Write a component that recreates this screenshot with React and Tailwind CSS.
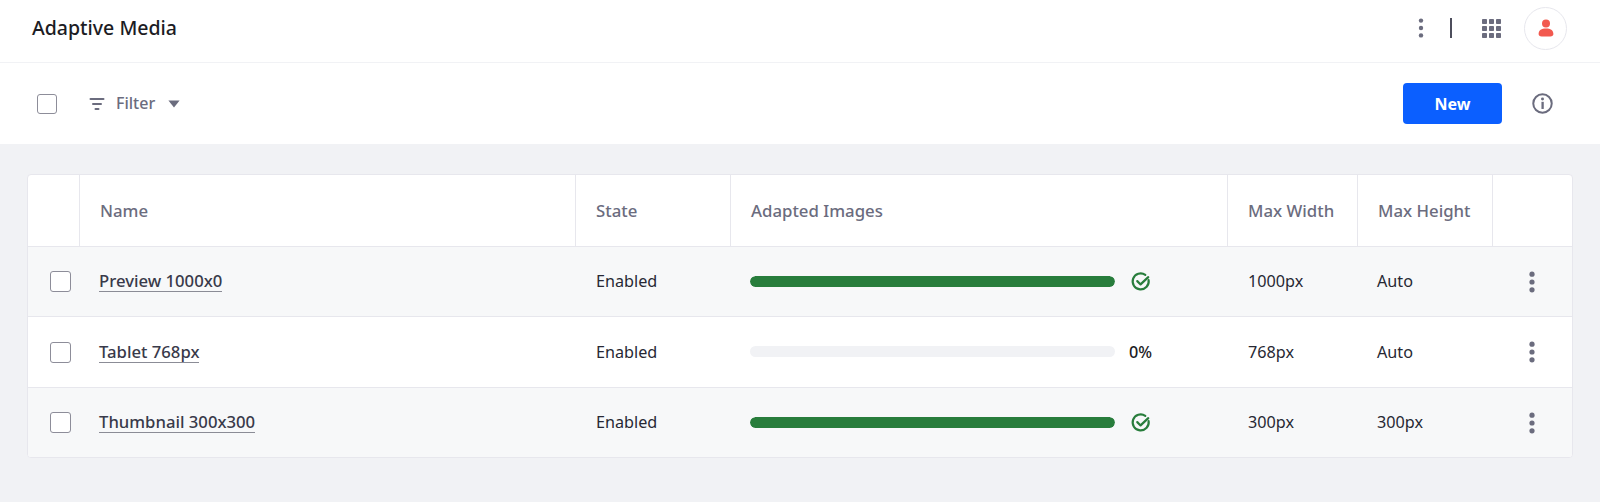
const cols = "grid-cols-[52px_496px_155px_497px_130px_135px_1fr]";

function Check({ className = "w-5 h-5" }) {
  return <div className={"bg-white border border-[#8d8d99] rounded-[3px] " + className} />;
}

function Kebab({ color = "#6b6c7e", r = 2.6, gap = 7.8 }) {
  return (
    <svg width="8" height="24" viewBox="0 0 8 24" fill={color}>
      <circle cx="4" cy={12 - gap} r={r} />
      <circle cx="4" cy="12" r={r} />
      <circle cx="4" cy={12 + gap} r={r} />
    </svg>
  );
}

function Head({ children, last }) {
  return (
    <div className={"flex items-center pl-[20px] h-full text-[16.8px] font-medium text-[#6b6c7e] " + (last ? "" : "border-r border-[#e7e7ed]")}>
      {children}
    </div>
  );
}

function Done() {
  return (
    <svg width="22" height="22" viewBox="0 0 20 20" fill="none" stroke="#287d3c" strokeWidth="2" strokeLinecap="round" strokeLinejoin="round">
      <path d="M16.9 8.2a7.3 7.3 0 1 1-3-4.7" />
      <path d="M6.6 9.2l3 3 7-6.6" />
    </svg>
  );
}

function Row({ name, pct, w, h, shaded, last, height }) {
  return (
    <div className={`grid ${cols} items-center ${height} text-[16.2px] text-[#272833] ${shaded ? "bg-[#f7f8f9]" : "bg-white"} ${last ? "" : "border-b border-[#e7e7ed]"}`}>
      <div className="flex justify-end pr-[9px]"><Check className="w-[21px] h-[21px]" /></div>
      <div className="pl-[19px]">
        <span className="text-[16.7px] font-medium text-[#393a4a] border-b border-[#8b8c96] leading-[20px] inline-block">{name}</span>
      </div>
      <div className="pl-[20px]">Enabled</div>
      <div className="pl-[19px] flex items-center">
        <div className="w-[365px] h-[11px] rounded-full bg-[#f1f2f5] overflow-hidden">
          {pct ? <div className="h-full w-full bg-[#287d3c] rounded-full" /> : null}
        </div>
        {pct ? (
          <span className="ml-[15px] flex"><Done /></span>
        ) : (
          <span className="ml-[14px] font-medium text-[#1c1c24]">0%</span>
        )}
      </div>
      <div className="pl-[20px]">{w}</div>
      <div className="pl-[19px]">{h}</div>
      <div className="flex justify-start pl-[35px]"><Kebab /></div>
    </div>
  );
}

export default function App() {
  return (
    <div className="min-h-[502px] bg-[#f1f2f5] font-['Noto_Sans','Open_Sans',sans-serif]">
      <header className="h-[63px] bg-white border-b border-[#f1f2f5] flex items-center pb-[6px] pl-[32px] pr-[33px]">
        <h1 className="text-[19.5px] font-medium text-[#1c1c24]">Adaptive Media</h1>
        <div className="ml-auto flex items-center">
          <Kebab r={2.2} gap={7.4} />
          <div className="w-[2px] h-[20px] bg-[#4d4e5c] ml-[25px]" />
          <svg className="ml-[30px]" width="19" height="19" viewBox="0 0 19 19" fill="#6b6c7e">
            {[0, 7, 14].flatMap((y) => [0, 7, 14].map((x) => <rect key={x + "-" + y} x={x} y={y} width="5" height="5" rx="0.8" />))}
          </svg>
          <div className="ml-[23px] w-[43px] h-[43px] rounded-full bg-white border border-[#e7e7ed] flex items-center justify-center">
            <svg width="16" height="18" viewBox="0 0 16 18" fill="#f2594f">
              <circle cx="8" cy="4.4" r="4" />
              <path d="M0.6 15c0-4 3-5.6 7.4-5.6s7.4 1.6 7.4 5.6c0 1.6-1.2 2.4-3 2.4H3.6c-1.8 0-3-.8-3-2.4z" />
            </svg>
          </div>
        </div>
      </header>

      <div className="h-[81px] bg-white flex items-center pl-[37px] pr-[47px]">
        <Check />
        <svg className="ml-[32px]" width="16" height="14" viewBox="0 0 16 14" fill="#6b6c7e">
          <rect x="0.5" y="1" width="15" height="2" rx="1" />
          <rect x="3" y="6" width="10" height="2" rx="1" />
          <rect x="5.5" y="11" width="5" height="2" rx="1" />
        </svg>
        <span className="ml-[11px] mb-[2px] text-[16px] font-medium text-[#6b6c7e]">Filter</span>
        <svg className="ml-[13px]" width="12" height="8" viewBox="0 0 12 8" fill="#6b6c7e">
          <path d="M0.4 0.6h11.2L6 7.4z" />
        </svg>
        <button className="ml-auto w-[99px] h-[41px] rounded-[4px] bg-[#0b5fff] text-white text-[16px] font-bold">New</button>
        <svg className="ml-[30px]" width="21" height="21" viewBox="0 0 20 20" fill="none">
          <circle cx="10" cy="10" r="8.8" stroke="#6b6c7e" strokeWidth="1.9" />
          <circle cx="10" cy="5.8" r="1.4" fill="#6b6c7e" />
          <rect x="9" y="8.4" width="2.2" height="6.8" fill="#6b6c7e" />
        </svg>
      </div>

      <main className="pt-[30px] px-[27px]">
        <div className="bg-white border border-[#e7e7ed] rounded-[4px] overflow-hidden">
          <div className={`grid ${cols} h-[72px] border-b border-[#e7e7ed]`}>
            <Head />
            <Head>Name</Head>
            <Head>State</Head>
            <Head>Adapted Images</Head>
            <Head>Max Width</Head>
            <Head>Max Height</Head>
            <Head last />
          </div>
          <Row name="Preview 1000x0" pct w="1000px" h="Auto" shaded height="h-[70px]" />
          <Row name="Tablet 768px" w="768px" h="Auto" height="h-[71px]" />
          <Row name="Thumbnail 300x300" pct w="300px" h="300px" shaded last height="h-[69px]" />
        </div>
      </main>
    </div>
  );
}
